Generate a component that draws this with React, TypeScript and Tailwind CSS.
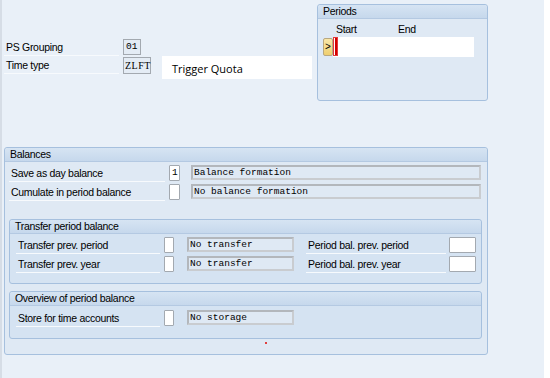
import React from "react";

const font = { fontFamily: '"Liberation Sans", Arial, sans-serif' };

function Label({ text, w }: { text: string; w: string }) {
  return (
    <div className={`${w} h-[17px] border-b border-[#f7fafd] pl-[2px] text-[10.5px] tracking-[-0.3px] leading-[17px] text-black whitespace-nowrap`}>
      {text}
    </div>
  );
}

function Input({ value = "", w }: { value?: string; w: string }) {
  return (
    <div className={`${w} h-[16px] bg-white border border-[#a3a9b0] rounded-[1px] font-['Liberation_Mono',monospace] text-[9.5px] leading-[14px] pl-[2px] text-black`}>
      {value}
    </div>
  );
}

function Display({ text, w }: { text: string; w: string }) {
  return (
    <div className={`${w} h-[15px] bg-[#dfe9f4] border-2 border-[#b3b7bc] border-b-[#c9ccd0] border-r-[#c9ccd0] font-['Liberation_Mono',monospace] text-[9.5px] leading-[11px] pl-[1px] text-black whitespace-nowrap`}>
      {text}
    </div>
  );
}

function Header({ title }: { title: string }) {
  return (
    <div className="h-[14px] bg-gradient-to-b from-[#d6e4f3] to-[#c6d8ec] border-b border-[#b4c9e2] rounded-t-[3px] pl-[5px] text-[10.5px] tracking-[-0.3px] leading-[13px] text-black">
      {title}
    </div>
  );
}

export default function App() {
  return (
    <div className="w-[550px] h-[378px] bg-white overflow-hidden" style={font}>
      <div className="w-[544px] h-[378px] bg-[#e9f0f8] border-l-2 border-[#d6dde6] flex flex-col">
        {/* top area */}
        <div className="flex h-[147px]">
          <div className="w-[315px] pl-[2px] pt-[39px] flex">
            <div className="flex flex-col gap-[1px]">
              <div className="flex items-start gap-[4px]">
                <Label text="PS Grouping" w="w-[115px]" />
                <div className="w-[18px] h-[16px] bg-[#e4ecf5] border border-[#a3a9b0] font-['Liberation_Mono',monospace] text-[9.5px] leading-[14px] pl-[2px]">
                  01
                </div>
              </div>
              <div className="flex items-start gap-[4px]">
                <Label text="Time type" w="w-[115px]" />
                <div className="w-[28px] h-[17px] bg-[#e4ecf5] border border-[#a3a9b0] font-['Liberation_Serif',serif] text-[10px] leading-[15px] pl-[1px] tracking-[0.5px]">
                  ZLFT
                </div>
              </div>
            </div>
            <div className="ml-[11px] mt-[17px] w-[150px] h-[23px] bg-white pl-[10px] pt-[6px] text-[11px] leading-[14px] font-['Open_Sans',sans-serif] text-black">
              Trigger Quota
            </div>
          </div>
          {/* Periods */}
          <div className="mt-[4px] w-[171px] h-[97px] bg-[#dfe9f4] border border-[#a6c0de] rounded-[3px] flex flex-col">
            <Header title="Periods" />
            <div className="flex pl-[18px] pt-[4px] text-[10.5px] tracking-[-0.3px] leading-[13px]">
              <span className="w-[62px]">Start</span>
              <span>End</span>
            </div>
            <div className="flex items-start mt-[1px] pl-[5px]">
              <div className="w-[10px] h-[18px] mt-[1px] bg-gradient-to-b from-[#f9e7a8] to-[#efcf6e] border border-[#b9a880] rounded-[2px] text-[10px] leading-[16px] pl-[1px]">
                &gt;
              </div>
              <div className="w-[141px] h-[20px] bg-white flex">
                <div className="w-[5px] h-[19px] border border-[#e23a3a] bg-white flex items-stretch">
                  <div className="w-[2px] bg-[#d40000] ml-[1px]" />
                </div>
              </div>
            </div>
          </div>
        </div>

        {/* Balances */}
        <div className="ml-[2px] w-[484px] h-[208px] bg-[#dfe9f4] border border-[#a6c0de] rounded-[3px] flex flex-col">
          <Header title="Balances" />
          <div className="flex flex-col gap-[2px] pt-[3px] pl-[4px]">
            <div className="flex items-start">
              <Label text="Save as day balance" w="w-[156px]" />
              <div className="ml-[4px]"><Input value="1" w="w-[11px]" /></div>
              <div className="ml-[11px]"><Display text="Balance formation" w="w-[290px]" /></div>
            </div>
            <div className="flex items-start">
              <Label text="Cumulate in period balance" w="w-[156px]" />
              <div className="ml-[4px]"><Input w="w-[11px]" /></div>
              <div className="ml-[11px]"><Display text="No balance formation" w="w-[290px]" /></div>
            </div>
          </div>

          {/* Transfer period balance */}
          <div className="mt-[18px] ml-[4px] w-[473px] h-[65px] bg-[#d5e3f2] border border-[#a6c0de] rounded-[3px] flex flex-col">
            <Header title="Transfer period balance" />
            <div className="flex flex-col gap-[2px] pt-[3px] pl-[6px]">
              {[
                ["Transfer prev. period", "Period bal. prev. period"],
                ["Transfer prev. year", "Period bal. prev. year"],
              ].map(([a, b]) => (
                <div key={a} className="flex items-start">
                  <Label text={a} w="w-[144px]" />
                  <div className="ml-[4px]"><Input w="w-[10px]" /></div>
                  <div className="ml-[13px]"><Display text="No transfer" w="w-[107px]" /></div>
                  <div className="ml-[12px]"><Label text={b} w="w-[140px]" /></div>
                  <div className="ml-[3px]"><Input w="w-[27px]" /></div>
                </div>
              ))}
            </div>
          </div>

          {/* Overview of period balance */}
          <div className="mt-[7px] ml-[4px] w-[473px] h-[48px] bg-[#d5e3f2] border border-[#a6c0de] rounded-[3px] flex flex-col">
            <Header title="Overview of period balance" />
            <div className="flex items-start pt-[4px] pl-[6px]">
              <Label text="Store for time accounts" w="w-[144px]" />
              <div className="ml-[4px]"><Input w="w-[10px]" /></div>
              <div className="ml-[13px]"><Display text="No storage" w="w-[107px]" /></div>
            </div>
          </div>
          <div className="mt-[3px] ml-[260px] w-[2px] h-[2px] bg-[#e04040]" />
        </div>
      </div>
    </div>
  );
}
